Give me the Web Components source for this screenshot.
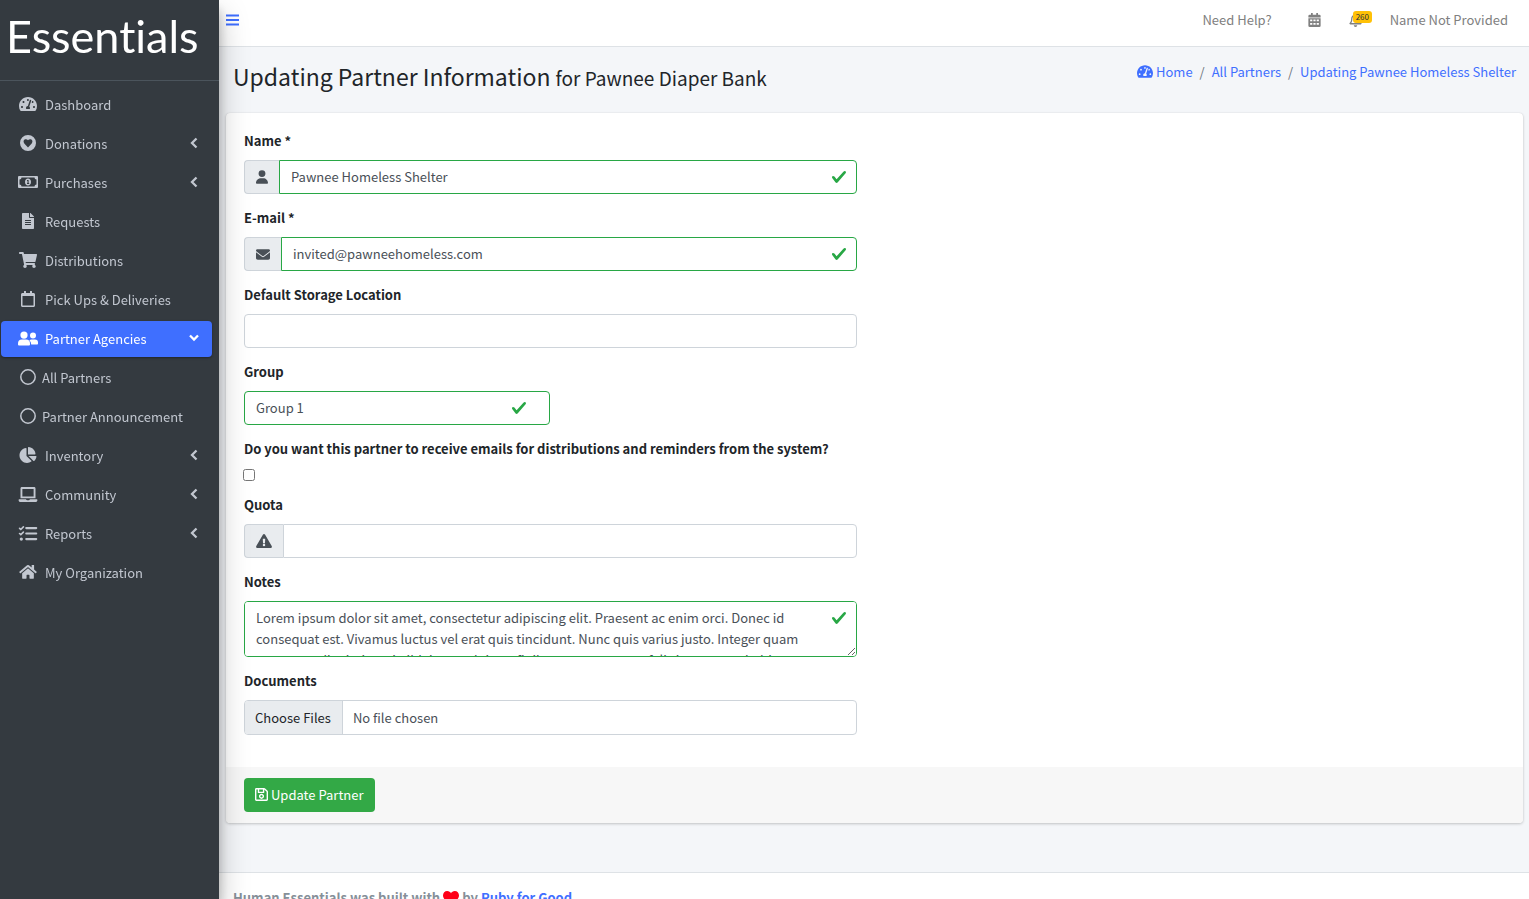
<!DOCTYPE html>
<html lang="en">
<head>
<meta charset="utf-8">
<title>Updating Partner Information</title>
<style>
html { scrollbar-width: none; }
body {
  margin: 0;
  background: #f4f6f9;
  color: #212529;
  font: 13px/21px "Noto Sans CJK SC", "Noto Sans", sans-serif;
}
</style>
</head>
<body>
<app-shell>
  <side-nav slot="sidebar">
    <nav-item icon="gauge">Dashboard</nav-item>
    <nav-item icon="heart-circle" menu>Donations</nav-item>
    <nav-item icon="money" menu>Purchases</nav-item>
    <nav-item icon="file">Requests</nav-item>
    <nav-item icon="cart">Distributions</nav-item>
    <nav-item icon="calendar-o">Pick Ups &amp; Deliveries</nav-item>
    <nav-item icon="users" menu active>Partner Agencies</nav-item>
    <nav-item icon="circle" child>All Partners</nav-item>
    <nav-item icon="circle" child>Partner Announcement</nav-item>
    <nav-item icon="pie" menu>Inventory</nav-item>
    <nav-item icon="laptop" menu>Community</nav-item>
    <nav-item icon="tasks" menu>Reports</nav-item>
    <nav-item icon="home">My Organization</nav-item>
  </side-nav>
  <top-bar></top-bar>
  <page-header>
    Updating Partner Information
    <span slot="sub">for Pawnee Diaper Bank</span>
  </page-header>
  <form-card>
    <form-field label="Name *" icon="user" value="Pawnee Homeless Shelter" valid></form-field>
    <form-field label="E-mail *" icon="envelope" type="email" value="invited@pawneehomeless.com" valid></form-field>
    <form-field label="Default Storage Location" type="select"></form-field>
    <form-field label="Group" type="select" value="Group 1" valid half></form-field>
    <form-field label="Do you want this partner to receive emails for distributions and reminders from the system?" type="checkbox"></form-field>
    <form-field label="Quota" icon="warning"></form-field>
    <form-field label="Notes" type="textarea" valid value="Lorem ipsum dolor sit amet, consectetur adipiscing elit. Praesent ac enim orci. Donec id consequat est. Vivamus luctus vel erat quis tincidunt. Nunc quis varius justo. Integer quam cursus, ac dignissim mi nibh ipsum dui nec finibus neque cursus, felis in purus ac habitasse in dui."></form-field>
    <form-field label="Documents" type="file"></form-field>
    <save-button slot="actions">Update Partner</save-button>
  </form-card>
  <page-footer></page-footer>
</app-shell>

<script>
const ICONS = {
  gauge: ['0 32 576 448', '<path d="M288 32C128.94 32 0 160.94 0 320c0 52.8 14.25 102.26 39.06 144.8 5.61 9.62 16.3 15.2 27.44 15.2h443c11.14 0 21.83-5.58 27.44-15.2C561.75 422.26 576 372.8 576 320c0-159.06-128.94-288-288-288zm0 64c14.71 0 26.58 10.13 30.32 23.65-1.11 2.26-2.64 4.23-3.45 6.67l-9.22 27.67c-5.13 3.49-10.97 6.01-17.64 6.01-17.67 0-32-14.33-32-32S270.33 96 288 96zM96 384c-17.67 0-32-14.33-32-32s14.33-32 32-32 32 14.33 32 32-14.33 32-32 32zm48-160c-17.67 0-32-14.33-32-32s14.33-32 32-32 32 14.33 32 32-14.33 32-32 32zm246.77-72.41l-61.33 184C343.13 347.33 352 364.54 352 384c0 11.72-3.38 22.55-8.88 32H232.88c-5.5-9.45-8.88-20.28-8.88-32 0-33.94 26.5-61.43 59.9-63.59l61.34-184.01c4.17-12.56 17.73-19.45 30.36-15.17 12.57 4.19 19.35 17.79 15.17 30.36zm14.66 57.2l15.52-46.55c3.47-1.29 7.13-2.23 11.05-2.23 17.67 0 32 14.33 32 32s-14.33 32-32 32c-11.38-.01-20.89-6.28-26.57-15.22zM480 384c-17.67 0-32-14.33-32-32s14.33-32 32-32 32 14.33 32 32-14.33 32-32 32z"/>'],
  'heart-circle': ['0 0 16 16', '<path fill-rule="evenodd" d="M8 0a8 8 0 1 1 0 16A8 8 0 0 1 8 0zM8 12.4l3.7-4c1.1-1.2.9-3-.3-3.8-1.2-.8-2.5-.4-3.4.6-.9-1-2.2-1.4-3.4-.6-1.2.8-1.4 2.6-.3 3.800z"/>'],
  money: ['0 0 20 12', '<path fill-rule="evenodd" d="M1 0h18a1 1 0 0 1 1 1v10a1 1 0 0 1-1 1H1a1 1 0 0 1-1-1V1a1 1 0 0 1 1-1zM3.500 1.500a2 2 0 0 1-2 2v5a2 2 0 0 1 2 2h13a2 2 0 0 1 2-2v-5a2 2 0 0 1-2-2z"/><path fill-rule="evenodd" d="M10 2.500c1.800 0 3 1.500 3 3.500s-1.200 3.500-3 3.500S7 8 7 6s1.200-3.500 3-3.500zM9 4v1h.5v2H9v1h2.200V7h-.6V4z"/>'],
  file: ['0 0 384 512', '<path d="M224 136V0H24C10.700 0 0 10.700 0 24v464c0 13.300 10.700 24 24 24h336c13.300 0 24-10.700 24-24V160H248c-13.200 0-24-10.800-24-24zm64 236c0 6.600-5.400 12-12 12H108c-6.600 0-12-5.400-12-12v-8c0-6.600 5.400-12 12-12h168c6.600 0 12 5.400 12 12zm0-64c0 6.600-5.400 12-12 12H108c-6.600 0-12-5.400-12-12v-8c0-6.600 5.400-12 12-12h168c6.600 0 12 5.400 12 12zm0-72v8c0 6.600-5.400 12-12 12H108c-6.600 0-12-5.400-12-12v-8c0-6.600 5.400-12 12-12h168c6.600 0 12 5.400 12 12zm96-114.100v6.100H256V0h6.100c6.400 0 12.500 2.500 17 7l97.900 98c4.500 4.500 7 10.600 7 16.900z"/>'],
  cart: ['0 0 576 512', '<path d="M528.12 301.319l47.273-208C578.806 78.301 567.391 64 551.99 64H159.208l-9.166-44.81C147.758 8.021 137.93 0 126.529 0H24C10.745 0 0 10.745 0 24v16c0 13.255 10.745 24 24 24h69.883l70.248 343.435C147.325 417.1 136 435.222 136 456c0 30.928 25.072 56 56 56s56-25.072 56-56c0-15.674-6.447-29.835-16.824-40h209.647C430.447 426.165 424 440.326 424 456c0 30.928 25.072 56 56 56s56-25.072 56-56c0-22.172-12.888-41.332-31.579-50.405l5.517-24.276c3.413-15.018-8.002-29.319-23.403-29.319H218.117l-6.545-32h293.145c11.206 0 20.920-7.754 23.403-18.681z"/>'],
  'calendar-o': ['0 0 448 512', '<path d="M400 64h-48V12c0-6.600-5.400-12-12-12h-40c-6.600 0-12 5.400-12 12v52H160V12c0-6.600-5.400-12-12-12h-40c-6.600 0-12 5.400-12 12v52H48C21.500 64 0 85.500 0 112v352c0 26.500 21.500 48 48 48h352c26.500 0 48-21.500 48-48V112c0-26.500-21.500-48-48-48zm-6 400H54c-3.300 0-6-2.700-6-6V160h352v298c0 3.300-2.700 6-6 6z"/>'],
  calendar: ['0 0 448 512', '<path fill-rule="evenodd" d="M96 0h64v64h128V0h64v64h48a48 48 0 0 1 48 48v48H0v-48a48 48 0 0 1 48-48h48zM0 192h448v272a48 48 0 0 1-48 48H48a48 48 0 0 1-48-48zM64 240v64h80v-64zM184 240v64h80v-64zM304 240v64h80v-64zM64 368v64h80v-64zM184 368v64h80v-64zM304 368v64h80v-64z"/>'],
  users: ['0 0 20 14', '<circle cx="6" cy="3.600" r="3.600"/><path d="M4 8h4a4 4 0 0 1 4 4v1a1 1 0 0 1-1 1H1a1 1 0 0 1-1-1v-1a4 4 0 0 1 4-4z"/><circle cx="15" cy="4" r="3"/><path d="M13.500 8H17a3 3 0 0 1 3 3v1.200a.8.8 0 0 1-.8.8h-6A5.500 5.500 0 0 0 11.400 8.700 4 4 0 0 1 13.500 8z"/>'],
  circle: ['0 0 16 16', '<circle cx="8" cy="8" r="7.200" fill="none" stroke="currentColor" stroke-width="1.500"/>'],
  pie: ['0 0 544 512', '<path d="M527.790 288H290.500l158.030 158.030c6.040 6.040 15.980 6.530 22.190.68 38.700-36.460 65.320-85.610 73.130-140.860 1.340-9.460-6.510-17.850-16.060-17.850zm-15.830-64.800C503.720 103.740 408.260 8.280 288.800.04 279.680-.59 272 7.100 272 16.240V240h223.770c9.140 0 16.820-7.680 16.190-16.800zM224 288V50.710c0-9.550-8.390-17.400-17.840-16.060C86.990 51.490-4.100 155.600.14 280.370 4.500 408.510 114.830 513.590 243.030 511.980c50.400-.63 96.970-16.870 135.260-44.030 7.900-5.600 8.420-17.230 1.570-24.080L224 288z"/>'],
  laptop: ['0 0 640 512', '<path d="M624 416H381.540c-.74 19.810-14.710 32-32.740 32H288c-18.690 0-33.020-17.470-32.770-32H16c-8.800 0-16 7.200-16 16v16c0 35.200 28.800 64 64 64h512c35.200 0 64-28.800 64-64v-16c0-8.800-7.200-16-16-16zM576 48c0-26.400-21.600-48-48-48H112C85.600 0 64 21.600 64 48v336h512V48zm-64 272H128V64h384v256z"/>'],
  tasks: ['0 0 16 13', '<g fill="none" stroke="currentColor" stroke-width="1.400" stroke-linecap="round"><path d="M.7 2l1.100 1L4 .8M.7 6.500l1.100 1L4 5.300"/><path stroke-width="1.900" d="M6.500 1.800h8.600M6.500 6.500h8.600M6.500 11.300h8.600"/></g><circle cx="2.200" cy="11.300" r="1.400"/>'],
  home: ['0 0 576 460', '<path d="M280.370 116.260L96 268.110V432c0 8.800 7.200 16 16 16l112.060-.29c8.800 0 15.940-7.200 15.940-16V336c0-8.800 7.200-16 16-16h64c8.800 0 16 7.200 16 16v95.640c0 8.800 7.200 16.070 16 16.070L464 448c8.800 0 16-7.200 16-16V268L295.670 116.260a12.200 12.200 0 0 0-15.300 0zM571.600 219.470L488 150.560V12c0-6.600-5.400-12-12-12h-56c-6.600 0-12 5.400-12 12v72.610L318.470 11a48 48 0 0 0-61 0L4.340 219.470a12 12 0 0 0-1.600 16.900l25.500 31a12 12 0 0 0 16.900 1.600L280.370 75.220a12.200 12.200 0 0 1 15.300 0L530.900 268.960a12 12 0 0 0 16.900-1.600l25.500-31a12 12 0 0 0-1.700-16.890z"/>'],
  user: ['0 0 448 512', '<path d="M224 256a128 128 0 1 0 0-256 128 128 0 1 0 0 256zm-45.700 48C79.800 304 0 383.800 0 482.300 0 498.700 13.300 512 29.700 512h388.600c16.400 0 29.700-13.300 29.700-29.700C448 383.800 368.200 304 269.700 304z"/>'],
  envelope: ['0 64 512 384', '<path d="M48 64C21.500 64 0 85.500 0 112c0 15.100 7.100 29.300 19.200 38.400l217.600 163.200c11.400 8.500 27 8.500 38.400 0l217.600-163.200c12.100-9.100 19.200-23.300 19.200-38.400 0-26.500-21.500-48-48-48zM0 176v208c0 35.300 28.700 64 64 64h384c35.300 0 64-28.700 64-64V176L294.400 339.200a64 64 0 0 1-76.800 0z"/>'],
  warning: ['0 0 576 512', '<path d="M569.517 440.013C587.975 472.007 564.806 512 527.940 512H48.054c-36.937 0-59.999-40.055-41.577-71.987L246.423 23.985c18.467-32.009 64.720-31.951 83.154 0zM288 354a46 46 0 1 0 0 92 46 46 0 0 0 0-92zm-43.673-165.346l7.418 136c.347 6.364 5.609 11.346 11.982 11.346h48.546c6.373 0 11.635-4.982 11.982-11.346l7.418-136c.375-6.874-5.098-12.654-11.982-12.654h-63.383c-6.884 0-12.356 5.780-11.981 12.654z"/>'],
  save: ['0 32 448 448', '<path d="M433.941 129.941l-83.882-83.882A48 48 0 0 0 316.118 32H48C21.490 32 0 53.490 0 80v352c0 26.510 21.490 48 48 48h352c26.510 0 48-21.490 48-48V163.882a48 48 0 0 0-14.059-33.941zM272 80v80H144V80h128zm122 352H54a6 6 0 0 1-6-6V86a6 6 0 0 1 6-6h42v104c0 13.255 10.745 24 24 24h176c13.255 0 24-10.745 24-24V83.882l78.243 78.243a6 6 0 0 1 1.757 4.243V426a6 6 0 0 1-6 6zM224 232c-48.523 0-88 39.477-88 88s39.477 88 88 88 88-39.477 88-88-39.477-88-88-88zm0 128c-22.056 0-40-17.944-40-40s17.944-40 40-40 40 17.944 40 40-17.944 40-40 40z"/>'],
  bars: ['0 0 13 12', '<path d="M0 .5h13v2H0zM0 5h13v2H0zM0 9.500h13v2H0z"/>'],
  bell: ['0 0 448 512', '<path d="M439.390 362.290c-19.320-20.760-55.470-51.990-55.470-154.290 0-77.700-54.480-139.900-127.940-155.160V32a32 32 0 1 0-64 0v20.840C118.560 68.100 64.080 130.300 64.080 208c0 102.300-36.150 133.530-55.470 154.290A31.200 31.200 0 0 0 0 384c.11 16.400 12.980 32 32.100 32h383.800c19.120 0 32-15.600 32.100-32a31.200 31.200 0 0 0-8.610-21.710zM67.530 368c21.220-27.970 44.420-74.330 44.530-159.420V208c0-61.860 50.140-112 112-112s112 50.140 112 112v.58c.11 85.100 23.310 131.460 44.530 159.420zM224 512a64 64 0 0 0 63.940-64H160.060A64 64 0 0 0 224 512z"/>'],
  left: ['0 0 8 12', '<path d="M6.500 1.500L2 6l4.500 4.500" fill="none" stroke="currentColor" stroke-width="2.300"/>'],
  down: ['0 0 10 8', '<path d="M1 1.500l4 4 4-4" fill="none" stroke="currentColor" stroke-width="2.300"/>'],
  check: ['0 0 8 8', '<path d="M2.300 6.730L.6 4.530c-.4-1.040.46-1.400 1.100-.8l1.100 1.400 3.400-3.800c.6-.63 1.600-.27 1.200.7l-4 4.600c-.43.5-.8.4-1.100.1z"/>'],
  heart: ['0 0 16 14', '<path d="M8 14C4 11 0 8 0 4.500 0 2 1.800 0 4.200 0 6 0 7.300 1 8 2.200 8.700 1 10 0 11.800 0 14.200 0 16 2 16 4.500 16 8 12 11 8 14z"/>']
};

function define(name, css, render) {
  customElements.define(name, class extends HTMLElement {
    constructor() {
      super();
      this.attachShadow({ mode: 'open' });
    }
    connectedCallback() {
      this.shadowRoot.innerHTML =
        `<style>:host,*{box-sizing:border-box}a{color:inherit;text-decoration:none}${css}</style>${render(this)}`;
    }
  });
}

define('app-icon', `
  :host { display: inline-flex; flex: none; width: 14px; height: 14px; }
  svg { width: 100%; height: 100%; fill: currentColor; }
`, el => {
  const [box, body] = ICONS[el.getAttribute('name')];
  return `<svg viewBox="${box}" aria-hidden="true">${body}</svg>`;
});

define('app-shell', `
  :host { display: grid; grid-template-columns: 219px minmax(0, 1fr); min-height: 100vh; }
  main { display: flex; flex-direction: column; }
`, () => `<slot name="sidebar"></slot><main><slot></slot></main>`);

define('side-nav', `
  :host {
    display: block; position: sticky; top: 0; z-index: 2; height: 100vh;
    background: #343a40; color: #c2c7d0;
    box-shadow: 0 14px 28px rgba(0,0,0,.25), 0 10px 10px rgba(0,0,0,.22);
  }
  .brand {
    display: flex; align-items: center; height: 81px; padding: 0 6px 8px;
    border-bottom: 1px solid #4b545c;
    color: #fff; font: 45px/72px Lato, sans-serif; font-variant-ligatures: none;
  }
  nav { display: flex; flex-direction: column; gap: 3px; padding: 6px 7px 0 1px; }
`, () => `<a class="brand" href="#">Essentials</a><nav><slot></slot></nav>`);

define('nav-item', `
  :host { display: block; }
  a { display: flex; align-items: center; height: 36px; padding: 0 13px 2px 16px; border-radius: 4px; }
  .box { display: flex; justify-content: center; width: 22px; margin-right: 6px; }
  .box app-icon { width: 20px; height: 15px; }
  .box .gauge, .box .home { height: 14px; }
  .box .money { height: 12px; }
  .box .file, .box .heart-circle, .box .cart, .box .calendar-o, .box .circle, .box .pie { height: 16px; }
  .label { flex: 1; white-space: nowrap; }
  .arrow { width: 10px; height: 12px; }
  :host([child]) .box { margin-right: 3px; }
  :host([active]) a { color: #fff; background: #3f6fff; box-shadow: 0 1px 3px rgba(0,0,0,.12), 0 1px 2px rgba(0,0,0,.24); }
`, el => {
  const icon = el.getAttribute('icon');
  const arrow = el.hasAttribute('active') ? 'down' : 'left';
  return `<a href="#"><span class="box"><app-icon class="${icon}" name="${icon}"></app-icon></span>
    <span class="label"><slot></slot></span>
    ${el.hasAttribute('menu') ? `<app-icon class="arrow" name="${arrow}"></app-icon>` : ''}</a>`;
});

define('top-bar', `
  :host {
    display: flex; align-items: center; justify-content: space-between; height: 47px;
    padding: 0 21px 7px 7px; border-bottom: 1px solid #dee2e6; background: #fff; color: #808080;
  }
  a { display: flex; }
  .menu { color: #3f6fff; }
  .menu app-icon { width: 13px; height: 12px; }
  nav { display: flex; align-items: center; gap: 28px; }
  .help { margin-right: 8px; }
  .bell { position: relative; }
  nav app-icon { width: 13px; }
  .badge {
    position: absolute; left: 4px; top: -2px; padding: 0 3px; border-radius: 3px;
    background: #ffc107; color: #1f2d3d; font-size: 8px; line-height: 12px;
  }
`, () => `<a class="menu" href="#" aria-label="Toggle menu"><app-icon name="bars"></app-icon></a>
  <nav><a class="help" href="#">Need Help?</a>
  <a href="#" aria-label="Calendar"><app-icon name="calendar"></app-icon></a>
  <a class="bell" href="#"><app-icon name="bell"></app-icon><span class="badge">260</span></a>
  <a href="#">Name Not Provided</a></nav>`);

define('page-header', `
  :host { display: flex; justify-content: space-between; padding: 14px 13px 21px 14px; }
  h1 { margin: 0; font-size: 23px; line-height: 31px; font-weight: 400; }
  small { font-size: 19px; line-height: 19px; }
  nav { display: flex; gap: 7px; color: #6c757d; height: 21px; }
  a { color: #3f6fff; display: flex; align-items: center; gap: 3px; }
  app-icon { width: 16px; height: 13px; }
`, () => `<h1><slot></slot> <small><slot name="sub"></slot></small></h1>
  <nav aria-label="Breadcrumb"><a href="#"><app-icon name="gauge"></app-icon>Home</a><span>/</span>
  <a href="#">All Partners</a><span>/</span><a href="#">Updating Pawnee Homeless Shelter</a></nav>`);

define('form-card', `
  :host {
    display: block; margin: 0 6px 49px 7px; border-radius: 4px; background: #fff; overflow: hidden;
    box-shadow: 0 0 1px rgba(0,0,0,.125), 0 1px 3px rgba(0,0,0,.2);
  }
  .fields { display: flex; flex-direction: column; gap: 13px; width: 50%; padding: 17px 18px 32px; }
  footer { padding: 11px 18px; background: #f7f7f7; }
`, () => `<form onsubmit="return false"><div class="fields"><slot></slot></div><footer><slot name="actions"></slot></footer></form>`);

define('form-field', `
  :host { display: block; }
  label { display: block; margin-bottom: 9px; font-weight: 700; white-space: nowrap; }
  .group { display: flex; position: relative; }
  .half { width: 50%; }
  .addon {
    display: flex; align-items: center; padding: 0 11px; border: 1px solid #ced4da; border-right: 0;
    border-radius: 4px 0 0 4px; background: #e9ecef; color: #495057;
  }
  .addon .user { width: 12px; }
  .addon .envelope { height: 11px; }
  .addon .warning { width: 16px; }
  .control {
    flex: 1; min-width: 0; height: 34px; margin: 0; padding: 0 11px; border: 1px solid #ced4da;
    border-radius: 4px; background: #fff; color: #495057; font: inherit; appearance: none; outline: 0;
  }
  input.control, select.control { padding-bottom: 1px; }
  .addon + .control { border-radius: 0 4px 4px 0; }
  .valid .control { border-color: #28a745; }
  textarea.control { height: 56px; padding: 5px 40px 6px 11px; resize: vertical; scrollbar-width: none; }
  .tick { position: absolute; right: 10px; top: 9px; width: 16px; height: 16px; color: #28a745; }
  .half .tick { right: 23px; }
  .check label { margin-bottom: 10px; }
  .check input { display: block; width: 12px; height: 12px; margin: 0 0 0 -1px; }
  input[type=file] { height: 35px; padding: 0; line-height: 33px; }
  input::file-selector-button {
    height: 33px; margin: 0 10px 0 0; padding: 0 11px 1px 10px; border: 0; border-right: 1px solid #ced4da;
    background: #e9ecef; color: #212529; font: inherit;
  }
`, el => {
  const type = el.getAttribute('type') || 'text';
  const value = el.getAttribute('value') || '';
  const icon = el.getAttribute('icon');
  const valid = el.hasAttribute('valid');
  const label = `<label for="f">${el.getAttribute('label')}</label>`;
  if (type === 'checkbox') return `<div class="check">${label}<input id="f" type="checkbox"></div>`;
  const control = {
    select: `<select id="f" class="control"><option>${value}</option></select>`,
    textarea: `<textarea id="f" class="control">${value}</textarea>`,
    file: `<input id="f" class="control" type="file" multiple>`
  }[type] || `<input id="f" class="control" type="${type}" value="${value}">`;
  return `${label}<div class="group ${valid ? 'valid' : ''} ${el.hasAttribute('half') ? 'half' : ''}">
    ${icon ? `<span class="addon"><app-icon class="${icon}" name="${icon}"></app-icon></span>` : ''}${control}
    ${valid ? '<app-icon class="tick" name="check"></app-icon>' : ''}</div>`;
});

define('save-button', `
  :host { display: block; }
  button {
    display: flex; align-items: center; gap: 3px; height: 34px; padding: 0 12px 2px 11px;
    border: 0; border-radius: 4px; background: #33a946; color: #fff; font: inherit;
  }
  app-icon { width: 13px; height: 13px; }
`, () => `<button type="submit"><app-icon name="save"></app-icon><slot></slot></button>`);

define('page-footer', `
  :host {
    display: flex; align-items: center; gap: 3px; padding: 14px; border-top: 1px solid #dee2e6;
    background: #fff; color: #869099; font-weight: 700;
  }
  app-icon { width: 16px; height: 14px; color: #ff0018; }
  a { color: #3f6fff; }
`, () => `<span>Human Essentials was built with</span><app-icon name="heart"></app-icon><span>by <a href="#">Ruby for Good</a></span>`);
</script>
</body>
</html>
